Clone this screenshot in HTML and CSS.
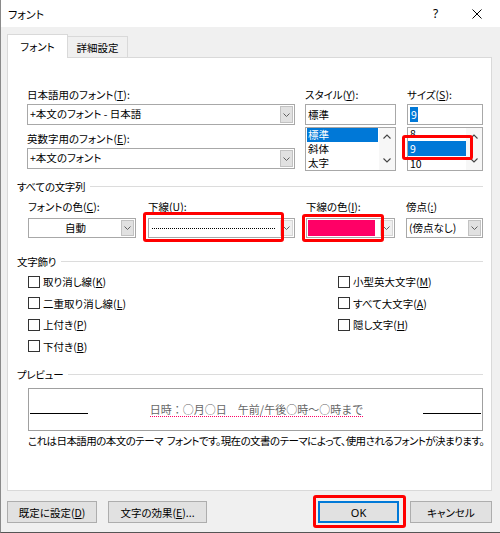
FILE: index.html
```html
<!DOCTYPE html>
<html lang="ja">
<head>
<meta charset="utf-8">
<title>フォント</title>
<link rel="stylesheet" href="styles.css">
</head>
<body>
<div class="window">
  <div class="titlebar">
    <span class="title">フォント</span>
    <span class="tb-help">?</span>
    <span class="tb-close"><svg width="10" height="10" viewBox="0 0 10 10"><path d="M0.5 0.5L9.5 9.5M9.5 0.5L0.5 9.5" stroke="#000" stroke-width="1" fill="none"/></svg></span>
  </div>
  <div class="client">
    <div class="tabs">
      <div class="tab tab-active">フォント</div>
      <div class="tab">詳細設定</div>
    </div>
    <div class="panel">
      <div class="fonts">
        <div class="col-font">
          <div class="lbl">日本語用のフォント(<u>T</u>):</div>
          <div class="combo">
            <div class="val">+本文のフォント - 日本語</div>
            <div class="drop"><svg class="chev" width="7" height="4" viewBox="0 0 7 4"><path d="M0.5 0.5L3.5 3.5L6.5 0.5"/></svg></div>
          </div>
          <div class="lbl lbl-2">英数字用のフォント(<u>E</u>):</div>
          <div class="combo">
            <div class="val">+本文のフォント</div>
            <div class="drop"><svg class="chev" width="7" height="4" viewBox="0 0 7 4"><path d="M0.5 0.5L3.5 3.5L6.5 0.5"/></svg></div>
          </div>
        </div>
        <div class="col-style">
          <div class="lbl">スタイル(<u>Y</u>):</div>
          <div class="textbox">標準</div>
          <div class="listbox">
            <div class="list list-style">
              <div class="item sel">標準</div>
              <div class="item">斜体</div>
              <div class="item">太字</div>
            </div>
            <div class="scroll">
              <svg class="sarrow" width="8" height="5" viewBox="0 0 8 5"><path d="M0.5 4.5L4 1L7.5 4.5"/></svg>
              <svg class="sarrow" width="8" height="5" viewBox="0 0 8 5"><path d="M0.5 0.5L4 4L7.5 0.5"/></svg>
            </div>
          </div>
        </div>
        <div class="col-size">
          <div class="lbl">サイズ(<u>S</u>):</div>
          <div class="textbox"><span class="selection">9</span></div>
          <div class="listbox listbox-size">
            <div class="list list-size">
              <div class="item">8</div>
              <div class="item sel">9</div>
              <div class="item">10</div>
            </div>
            <div class="scroll">
              <svg class="sarrow" width="8" height="5" viewBox="0 0 8 5"><path d="M0.5 4.5L4 1L7.5 4.5"/></svg>
              <svg class="sarrow" width="8" height="5" viewBox="0 0 8 5"><path d="M0.5 0.5L4 4L7.5 0.5"/></svg>
            </div>
            <div class="redbox rb-size"></div>
          </div>
        </div>
      </div>

      <div class="group group-all"><span>すべての文字列</span><i class="rule"></i></div>
      <div class="attrs">
        <div class="attr attr-color">
          <div class="lbl">フォントの色(<u>C</u>):</div>
          <div class="combo combo-sm">
            <div class="val val-center">自動</div>
            <div class="drop"><svg class="chev" width="7" height="4" viewBox="0 0 7 4"><path d="M0.5 0.5L3.5 3.5L6.5 0.5"/></svg></div>
          </div>
        </div>
        <div class="attr attr-ul">
          <div class="lbl">下線(<u>U</u>):</div>
          <div class="combo combo-sm combo-red">
            <div class="val val-dots"><div class="dots"></div></div>
            <div class="drop drop-light"><svg class="chev" width="7" height="4" viewBox="0 0 7 4"><path d="M0.5 0.5L3.5 3.5L6.5 0.5"/></svg></div>
            <div class="redbox rb-ul"></div>
          </div>
        </div>
        <div class="attr attr-ulcolor">
          <div class="lbl">下線の色(<u>I</u>):</div>
          <div class="combo combo-sm combo-red">
            <div class="swatch"></div>
            <div class="drop drop-light"><svg class="chev" width="7" height="4" viewBox="0 0 7 4"><path d="M0.5 0.5L3.5 3.5L6.5 0.5"/></svg></div>
            <div class="redbox rb-ulc"></div>
          </div>
        </div>
        <div class="attr attr-em">
          <div class="lbl">傍点(<u>:</u>)</div>
          <div class="combo combo-sm">
            <div class="val">(傍点なし)</div>
            <div class="drop"><svg class="chev" width="7" height="4" viewBox="0 0 7 4"><path d="M0.5 0.5L3.5 3.5L6.5 0.5"/></svg></div>
          </div>
        </div>
      </div>

      <div class="group group-deco"><span>文字飾り</span><i class="rule"></i></div>
      <div class="checks">
        <div class="check-col check-col-left">
          <div class="check"><span class="box"></span>取り消し線(<u>K</u>)</div>
          <div class="check"><span class="box"></span>二重取り消し線(<u>L</u>)</div>
          <div class="check"><span class="box"></span>上付き(<u>P</u>)</div>
          <div class="check"><span class="box"></span>下付き(<u>B</u>)</div>
        </div>
        <div class="check-col">
          <div class="check"><span class="box"></span>小型英大文字(<u>M</u>)</div>
          <div class="check"><span class="box"></span>すべて大文字(<u>A</u>)</div>
          <div class="check"><span class="box"></span>隠し文字(<u>H</u>)</div>
        </div>
      </div>

      <div class="group group-preview"><span>プレビュー</span><i class="rule"></i></div>
      <div class="preview">
        <div class="pline"></div>
        <span class="ptext">日時：○月○日　午前/午後○時～○時まで</span>
        <div class="pline"></div>
      </div>
      <div class="desc">これは日本語用の本文のテーマ フォントです。現在の文書のテーマによって、使用されるフォントが決まります。</div>
    </div>

    <div class="buttons">
      <div class="btn btn-default">既定に設定(<u>D</u>)</div>
      <div class="btn btn-effects">文字の効果(<u>E</u>)...</div>
      <div class="btn btn-ok">OK<div class="redbox rb-ok"></div></div>
      <div class="btn btn-cancel">キャンセル</div>
    </div>
  </div>
</div>
</body>
</html>
```
FILE: styles.css
```css
* { box-sizing: border-box; }
html, body { margin: 0; padding: 0; }
body {
  width: 500px;
  height: 533px;
  overflow: hidden;
  background: #f0f0f0;
  font-family: "Noto Sans CJK JP", "Noto Sans", sans-serif;
  font-size: 10.5px;
  font-feature-settings: "palt";
  color: #000;
}
u { text-decoration: underline; text-underline-offset: 1px; }

.window {
  height: 533px;
  border-left: 1px solid #8a8a8a;
  border-bottom: 1px solid #555;
  background: #f0f0f0;
}

/* title bar */
.titlebar {
  height: 27px;
  background: #fff;
  display: flex;
  align-items: center;
  padding-left: 7px;
}
.title { flex: 1; font-size: 11px; }
.tb-help { width: 37px; text-align: center; font-size: 12px; font-family: "Noto Sans", sans-serif; }
.tb-close { width: 46px; display: flex; justify-content: center; align-items: center; }

.client { padding: 7px 8px 0 6px; }

/* tabs */
.tabs { display: flex; align-items: flex-end; height: 23px; }
.tab {
  width: 61px;
  height: 21px;
  border: 1px solid #d9d9d9;
  border-bottom: none;
  background: #f0f0f0;
  margin-left: -1px;
  display: flex;
  align-items: center;
  justify-content: center;
}
.tab-active {
  position: relative;
  z-index: 1;
  height: 24px;
  margin-left: 0;
  margin-bottom: -1px;
  background: #fff;
  padding-bottom: 1px;
}

/* panel */
.panel {
  height: 434px;
  background: #fff;
  border: 1px solid #d9d9d9;
}

.lbl { height: 16px; line-height: 16px; white-space: nowrap; margin-bottom: 1px; }
.lbl-2 { margin-top: 6px; }

.fonts { display: flex; padding: 29px 0 0 19px; }
.col-font { width: 268px; }
.col-style { width: 91px; margin-left: 10px; }
.col-size { width: 76px; margin-left: 11px; }

.combo {
  position: relative;
  display: flex;
  height: 21px;
  border: 1px solid #a8a8a8;
  background: #fff;
}
.combo-sm { height: 20px; }
.val {
  flex: 1;
  min-width: 0;
  padding-left: 2px;
  line-height: 18px;
  white-space: nowrap;
  overflow: hidden;
}
.combo-sm .val { line-height: 17px; }
.val-center { text-align: center; }
.val-dots { display: flex; align-items: center; padding: 0 4px 0 3px; }
.dots { flex: 1; border-top: 1px dotted #000; }
.swatch { flex: 1; margin: 1px 4px 1px 1px; background: #ff0066; }
.drop {
  width: 13px;
  margin: 1px;
  background: #e1e1e1;
  border: 1px solid #c2c2c2;
  display: flex;
  align-items: center;
  justify-content: center;
}
.drop-light { background: #efefef; border-color: #d6d6d6; }
.chev path { fill: none; stroke: #606060; stroke-width: 1; }

.textbox {
  height: 21px;
  border: 1px solid #a8a8a8;
  background: #fff;
  padding-left: 2px;
  line-height: 19px;
}
.selection { background: #0078d7; color: #fff; padding: 0 1px; }

.listbox {
  position: relative;
  display: flex;
  height: 44px;
  margin-top: 2px;
  border: 1px solid #a8a8a8;
  background: #fff;
}
.list { flex: 1; overflow: hidden; }
.item { height: 14px; line-height: 14px; padding-left: 2px; white-space: nowrap; }
.list-style .item { margin: 0 1px; padding-left: 1px; }
.list-size .item { height: 15px; line-height: 15px; }
.list-size .item:first-child { margin-top: -2px; }
.item.sel { background: #0078d7; color: #fff; }
.scroll {
  width: 16px;
  background: #f7f7f7;
  display: flex;
  flex-direction: column;
  justify-content: space-between;
  align-items: center;
  padding: 6px 0 7px;
}
.sarrow path { fill: none; stroke: #444; stroke-width: 1.1; }

/* red highlight frames */
.redbox {
  position: absolute;
  border: 3px solid #f00;
  border-radius: 3px;
  pointer-events: none;
}
.rb-size { left: -6px; top: 7px; width: 71px; height: 25px; }
.rb-ul { left: -6px; top: -7px; width: 141px; height: 30px; }
.rb-ulc { left: -5px; top: -5px; width: 82px; height: 28px; }
.rb-ok { left: -6px; top: -7px; width: 93px; height: 33px; }

/* group headings */
.group {
  display: flex;
  align-items: center;
  height: 16px;
  padding: 0 8px 0 9px;
  white-space: nowrap;
}
.group span { letter-spacing: -0.3px; }
.rule { flex: 1; border-top: 1px solid #dcdcdc; margin-left: 5px; }
.group-all { margin-top: 7px; }
.group-deco { margin-top: 15px; }
.group-preview { margin-top: 9px; }

/* attributes row */
.attrs { display: flex; padding-left: 20px; margin-top: 5px; }
.attrs .lbl { margin-bottom: 3px; }
.attr-color { width: 108px; }
.attr-ul { width: 147px; margin-left: 12px; }
.attr-ulcolor { width: 89px; margin-left: 11px; }
.attr-em { width: 77px; margin-left: 11px; }

/* checkboxes */
.checks { display: flex; padding-left: 20px; margin-top: 2px; }
.check-col-left { width: 310px; }
.check { height: 21.5px; display: flex; align-items: center; white-space: nowrap; }
.box {
  width: 12px;
  height: 12px;
  border: 1px solid #333;
  background: #fff;
  margin-right: 3px;
  flex: none;
}

/* preview */
.preview {
  margin: 6px 8px 0 20px;
  height: 43px;
  border: 1px solid #a0a0a0;
  display: flex;
  align-items: center;
  justify-content: space-between;
  padding: 0 1px;
}
.pline { width: 58px; border-top: 1px solid #000; margin-top: 7px; }
.ptext {
  font-size: 11px;
  font-feature-settings: normal;
  color: #666;
  line-height: 14px;
  border-bottom: 1px dotted #ff0066;
  margin-left: 2px;
}
.desc {
  margin: 2px 0 0 20px;
  line-height: 16px;
  white-space: nowrap;
  letter-spacing: -0.55px;
  word-spacing: 2px;
}

/* buttons */
.buttons { display: flex; margin-top: 10px; }
.btn {
  height: 22px;
  border: 1px solid #adadad;
  background: #e1e1e1;
  display: flex;
  align-items: center;
  justify-content: center;
  white-space: nowrap;
}
.btn-default { width: 90px; }
.btn-effects { width: 99px; margin-left: 11px; }
.btn-ok {
  position: relative;
  width: 81px;
  margin-left: auto;
  border-color: #0078d7;
  box-shadow: inset 0 0 0 1px #0078d7;
  font-family: "Noto Sans", sans-serif;
  font-size: 11px;
}
.btn-cancel { width: 82px; margin-left: 11px; }
```
